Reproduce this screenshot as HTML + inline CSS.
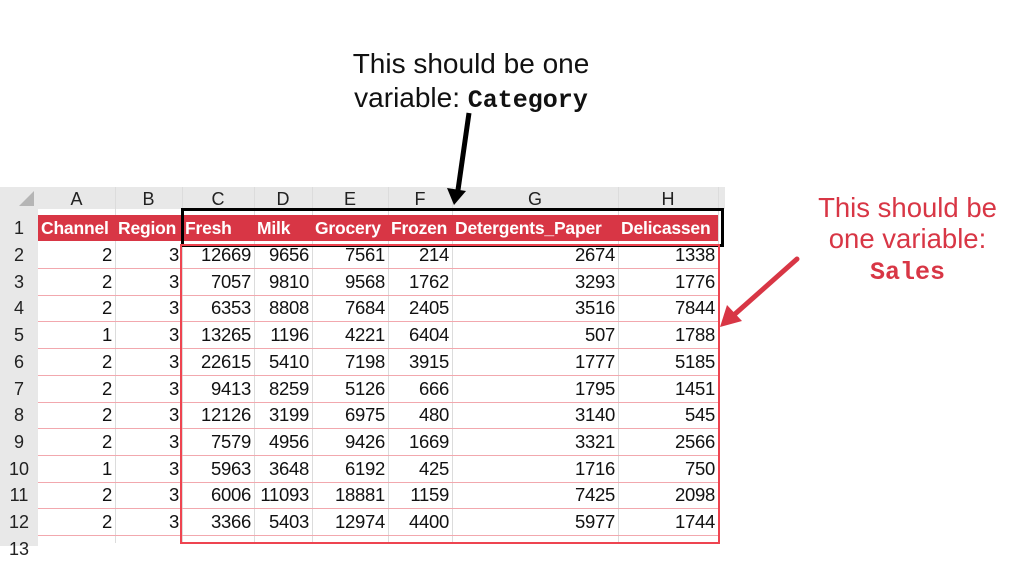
<!DOCTYPE html>
<html><head><meta charset="utf-8"><style>
body{margin:0;width:1024px;height:543px;background:#fff;position:relative;overflow:hidden;font-family:"Liberation Sans",sans-serif}
.a{position:absolute}
.c{position:absolute;font-size:18.5px;color:#111;text-align:right;line-height:26px;box-sizing:border-box;padding-right:3px;letter-spacing:-0.3px}
.h{position:absolute;font-size:18px;color:#222;text-align:center;line-height:22px}
.rn{position:absolute;left:0;width:38px;text-align:center;font-size:18px;color:#222;background:#e8e8e8;line-height:26px}
.hd{position:absolute;top:215px;height:26px;line-height:26px;background:#d83645;color:#fff;font-weight:bold;font-size:17.5px;box-sizing:border-box;padding-left:3px;white-space:nowrap;letter-spacing:-0.2px}
.mono{font-family:"Liberation Mono",monospace;font-weight:bold}
</style></head><body>
<div class="a" style="left:0;top:187px;width:725px;height:22px;background:#e8e8e8"></div>
<div class="a" style="left:0;top:187px;width:38px;height:356px;background:#e8e8e8"></div>
<svg class="a" style="left:0;top:187px" width="38" height="22"><polygon points="34,4 34,19 19,19" fill="#b5b5b5"/></svg>
<div id="g"></div>
<div class="a" style="left:176px;top:47px;width:590px;text-align:center;font-size:28px;line-height:34px;color:#111">This should be one<br>variable: <span class="mono" style="font-size:25px">Category</span></div>
<div class="a" style="left:790px;top:192px;width:235px;text-align:center;font-size:27.5px;line-height:31px;color:#d83645">This should be<br>one variable:<br><span class="mono" style="font-size:25px">Sales</span></div>
<div class="a" style="left:181px;top:208px;width:537px;height:33px;border:3px solid #000"></div>
<div class="a" style="left:180px;top:244px;width:536px;height:296px;border:2px solid #ee4450"></div>
<svg class="a" style="left:0;top:0" width="1024" height="543">
<line x1="469" y1="113" x2="458" y2="190" stroke="#000" stroke-width="5"/>
<polygon points="447,188 466,191 454,205" fill="#000"/>
<line x1="797" y1="259" x2="735" y2="314" stroke="#d83645" stroke-width="5" stroke-linecap="round"/>
<polygon points="720,327 727,305 742,321" fill="#d83645"/>
</svg>
<script>
var cols=[38,115,182,254,312,388,452,618,718];
var L="ABCDEFGH",s="";
for(var i=0;i<8;i++){s+='<div class="h" style="left:'+cols[i]+'px;width:'+(cols[i+1]-cols[i])+'px;top:188px">'+L[i]+'</div>';
s+='<div class="a" style="left:'+cols[i+1]+'px;top:187px;width:1px;height:356px;background:#dcdcdc"></div>';}
var hn=["Channel","Region","Fresh","Milk","Grocery","Frozen","Detergents_Paper","Delicassen"];
for(i=0;i<8;i++)s+='<div class="hd" style="left:'+cols[i]+'px;width:'+(cols[i+1]-cols[i])+'px">'+hn[i]+'</div>';
s+='<div class="rn" style="top:214px;height:28px;line-height:28px">1</div>';
var d=[[2,3,12669,9656,7561,214,2674,1338],[2,3,7057,9810,9568,1762,3293,1776],[2,3,6353,8808,7684,2405,3516,7844],[1,3,13265,1196,4221,6404,507,1788],[2,3,22615,5410,7198,3915,1777,5185],[2,3,9413,8259,5126,666,1795,1451],[2,3,12126,3199,6975,480,3140,545],[2,3,7579,4956,9426,1669,3321,2566],[1,3,5963,3648,6192,425,1716,750],[2,3,6006,11093,18881,1159,7425,2098],[2,3,3366,5403,12974,4400,5977,1744]];
for(var r=0;r<11;r++){var t=242+r*26.7;
s+='<div class="rn" style="top:'+t+'px;height:26.7px">'+(r+2)+'</div>';
s+='<div class="a" style="left:38px;top:'+(t+26)+'px;width:680px;height:1px;background:#f2a8ae"></div>';
for(i=0;i<8;i++)s+='<div class="c" style="left:'+cols[i]+'px;width:'+(cols[i+1]-cols[i])+'px;top:'+t+'px">'+d[r][i]+'</div>';}
s+='<div class="rn" style="top:536px;height:10px">13</div>';
document.getElementById("g").innerHTML=s;
</script>
</body></html>
